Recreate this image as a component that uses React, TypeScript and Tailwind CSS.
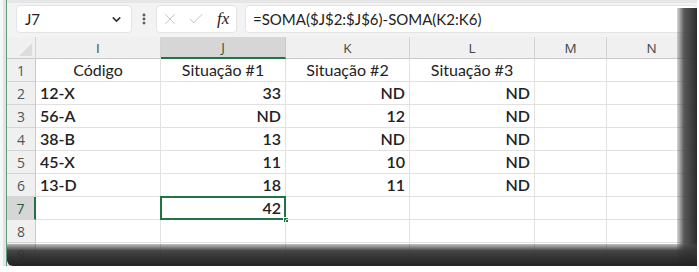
import { ChevronDown, EllipsisVertical, X, Check } from "lucide-react";

const cols = ["I", "J", "K", "L", "M", "N"];

type Cell = { v: string; align?: "left" | "center" | "right"; bold?: boolean };

const rows: Cell[][] = [
    [
        { v: "Código", align: "center" },
        { v: "Situação #1", align: "center" },
        { v: "Situação #2", align: "center" },
        { v: "Situação #3", align: "center" },
    ],
    [{ v: "12-X", bold: true }, { v: "33", align: "right", bold: true }, { v: "ND", align: "right", bold: true }, { v: "ND", align: "right", bold: true }],
    [{ v: "56-A", bold: true }, { v: "ND", align: "right", bold: true }, { v: "12", align: "right", bold: true }, { v: "ND", align: "right", bold: true }],
    [{ v: "38-B", bold: true }, { v: "13", align: "right", bold: true }, { v: "ND", align: "right", bold: true }, { v: "ND", align: "right", bold: true }],
    [{ v: "45-X", bold: true }, { v: "11", align: "right", bold: true }, { v: "10", align: "right", bold: true }, { v: "ND", align: "right", bold: true }],
    [{ v: "13-D", bold: true }, { v: "18", align: "right", bold: true }, { v: "11", align: "right", bold: true }, { v: "ND", align: "right", bold: true }],
    [{ v: "" }, { v: "42", align: "right", bold: true }],
    [],
    [],
];

const gridCols = "grid grid-cols-[29px_125px_125px_124px_125px_72px_1fr]";

export default function App() {
    return (
        <div className="w-[699px] h-[272px] bg-white overflow-hidden">
            <div className="relative w-[697px] h-[266px] overflow-hidden border-l-[3px] border-[#f7f7f7] bg-white">
                <div className="h-full border-l-[3px] border-[#e3e3e3]">
                    <div className="h-full border-l-[1px] border-[#5c9c7c] flex flex-col">
                        {/* formula bar */}
                        <div className="h-[40px] bg-[#f3f3f3] border-t-[3px] border-[#e6e6e6] flex items-start pt-[2px] pl-[9px] font-['Lato',sans-serif]">
                            <div className="w-[116px] h-[28px] bg-white rounded-[4px] border border-[#e4e4e4] flex items-center justify-between pl-[8px] pr-[8px]">
                                <span className="text-[15px] text-[#222]">J7</span>
                                <ChevronDown size={13} strokeWidth={3} className="text-[#333]" />
                            </div>
                            <div className="w-[24px] h-[28px] flex items-center justify-center">
                                <EllipsisVertical size={14} strokeWidth={3} className="text-[#555]" />
                            </div>
                            <div className="w-[81px] h-[28px] bg-white rounded-[4px] border border-[#e4e4e4] flex items-center pl-[4px] gap-[8px]">
                                <X size={18} strokeWidth={1.2} className="text-[#bdbdbd]" />
                                <Check size={18} strokeWidth={1.2} className="text-[#bdbdbd]" />
                                <span className="text-[17px] italic font-['Liberation_Serif',serif] text-[#222] ml-[4px]">fx</span>
                            </div>
                            <div className="ml-[8px] flex-1 h-[28px] bg-white rounded-[4px] border border-[#e4e4e4] flex items-center pl-[7px]">
                                <span className="text-[15px] text-[#222]">=SOMA($J$2:$J$6)-SOMA(K2:K6)</span>
                            </div>
                        </div>

                        {/* column headers */}
                        <div className={`${gridCols} h-[22px] bg-[#f0f0f0] border-b border-[#c9c9c9] font-['Open_Sans',sans-serif] text-[13.5px] text-[#444]`}>
                            <div className="relative border-r border-[#d4d4d4]">
                                <div className="absolute right-[3px] bottom-[3px] w-0 h-0 border-l-[13px] border-l-transparent border-b-[13px] border-b-[#dcdcdc]" />
                            </div>
                            {cols.map((c) => (
                                <div
                                    key={c}
                                    className={
                                        c === "J"
                                            ? "flex items-center justify-center bg-[#d6d6d6] border-r border-[#c9c9c9] border-b-2 border-b-[#217346] text-[#1e5e3c]"
                                            : "flex items-center justify-center border-r border-[#d4d4d4]"
                                    }
                                >
                                    {c}
                                </div>
                            ))}
                        </div>

                        {/* rows */}
                        {rows.map((r, i) => (
                            <div key={i} className={`${gridCols} h-[23px] shrink-0`}>
                                <div
                                    className={
                                        i === 6
                                            ? "flex items-center justify-center bg-[#d6d6d6] border-r-2 border-[#217346] border-b border-b-[#d4d4d4] font-['Open_Sans',sans-serif] text-[14px] text-[#1e5e3c]"
                                            : "flex items-center justify-center bg-[#f0f0f0] border-r border-[#c9c9c9] border-b border-b-[#d4d4d4] font-['Open_Sans',sans-serif] text-[14px] text-[#555]"
                                    }
                                >
                                    {i + 1}
                                </div>
                                {cols.map((c, j) => {
                                    const cell = r[j];
                                    const sel = i === 6 && c === "J";
                                    return (
                                        <div
                                            key={c}
                                            className={
                                                "relative flex items-end pb-[1px] px-[4px] border-r border-b border-[#e1e1e1] font-['Lato',sans-serif] text-[16px] leading-[20px] text-[#222] " +
                                                (cell?.align === "right" ? "justify-end " : cell?.align === "center" ? "justify-center " : "justify-start ") +
                                                (cell?.bold ? "font-semibold" : "font-normal")
                                            }
                                        >
                                            {cell?.v}
                                            {sel && (
                                                <>
                                                    <div className="absolute -left-[1px] -top-[1px] -right-[1px] -bottom-[1px] border-2 border-[#217346]" />
                                                    <div className="absolute -right-[4px] -bottom-[4px] w-[6px] h-[6px] bg-[#217346] border border-white" />
                                                </>
                                            )}
                                        </div>
                                    );
                                })}
                            </div>
                        ))}
                    </div>
                </div>

                {/* shadow edges */}
                <div className="absolute right-0 top-[8px] bottom-0 w-[20px] bg-[linear-gradient(to_right,rgba(60,60,60,0.2),rgba(60,60,60,0.85)_35%,rgba(45,45,45,1))]" />
                <div className="absolute left-[4px] right-0 bottom-0 h-[22px] bg-[linear-gradient(to_bottom,rgba(80,80,80,0.35),rgba(55,55,55,0.92)_30%,rgba(45,45,45,0.97)_60%,rgba(35,35,35,1))] rounded-bl-[6px]" />
            </div>
        </div>
    );
}
